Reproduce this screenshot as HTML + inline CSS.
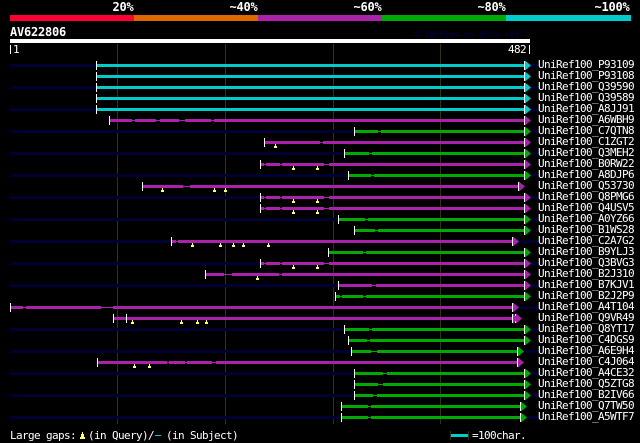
<!DOCTYPE html>
<html><head><meta charset="utf-8"><title>AV622806</title>
<style>
html,body{margin:0;padding:0;background:#000;width:640px;height:443px;overflow:hidden}
svg{display:block}
text{font-family:"DejaVu Sans Mono","Liberation Mono",monospace;fill:#fff;white-space:pre}
.l{font-size:11px;letter-spacing:-.62px}
.b{font-size:12px;font-weight:bold;letter-spacing:-.22px}
.n{fill:#003}.w{fill:#fff}.c{fill:#0cc}.p{fill:#a2a}.g{fill:#0a0}.y{fill:#ff6}
.r path{shape-rendering:crispEdges}
.r path.t{shape-rendering:auto}
</style></head><body>
<svg width="640" height="443" viewBox="0 0 640 443" xmlns="http://www.w3.org/2000/svg">
<rect width="640" height="443" fill="#000"/>
<g shape-rendering="crispEdges">
<rect x="10" y="15" width="124" height="6" fill="#f03"/>
<rect x="134" y="15" width="124" height="6" fill="#d60"/>
<rect x="258" y="15" width="124" height="6" fill="#a2a"/>
<rect x="382" y="15" width="124" height="6" fill="#0a0"/>
<rect x="506" y="15" width="125" height="6" fill="#0cc"/>
<rect x="10" y="39" width="520" height="4" fill="#fff"/>
<rect x="10" y="45" width="1" height="9" fill="#fff"/>
<rect x="529" y="45" width="1" height="9" fill="#fff"/>
<rect x="117" y="44" width="1" height="380" fill="#331"/>
<rect x="225" y="44" width="1" height="380" fill="#331"/>
<rect x="333" y="44" width="1" height="380" fill="#331"/>
<rect x="440" y="44" width="1" height="380" fill="#331"/>
</g>
<text class="b" x="112.5" y="11">20%</text>
<text class="b" x="229.5" y="11">~40%</text>
<text class="b" x="353.5" y="11">~60%</text>
<text class="b" x="477.5" y="11">~80%</text>
<text class="b" x="594.5" y="11">~100%</text>
<text class="b" x="10" y="36">AV622806</text>
<text x="414" y="37" style="font-size:8.33px;font-weight:bold;fill:#003">AlignView.pm Beta rel.7</text>
<text class="l" x="13" y="53">1</text>
<text class="l" x="508" y="53">482</text>

<g class="r" transform="translate(0,64)"><path class="n" d="M10 0H96V3H10zM530 0H539V3H530z"/><path class="c" d="M97 0H525V3H97z"/><path class="w" d="M96-3h1v9h-1zM524-3h1v9h-1z"/><path class="c t" d="M525-3.5L531 1.5L525 6.5z"/></g>
<g class="r" transform="translate(0,75)"><path class="c" d="M97 0H525V3H97z"/><path class="w" d="M96-3h1v9h-1zM524-3h1v9h-1z"/><path class="c t" d="M525-3.5L531 1.5L525 6.5z"/></g>
<g class="r" transform="translate(0,86)"><path class="n" d="M10 0H96V3H10zM530 0H539V3H530z"/><path class="c" d="M97 0H525V3H97z"/><path class="w" d="M96-3h1v9h-1zM524-3h1v9h-1z"/><path class="c t" d="M525-3.5L531 1.5L525 6.5z"/></g>
<g class="r" transform="translate(0,97)"><path class="c" d="M97 0H525V3H97z"/><path class="w" d="M96-3h1v9h-1zM524-3h1v9h-1z"/><path class="c t" d="M525-3.5L531 1.5L525 6.5z"/></g>
<g class="r" transform="translate(0,108)"><path class="n" d="M10 0H96V3H10zM530 0H539V3H530z"/><path class="c" d="M97 0H525V3H97z"/><path class="w" d="M96-3h1v9h-1zM524-3h1v9h-1z"/><path class="c t" d="M525-3.5L531 1.5L525 6.5z"/></g>
<g class="r" transform="translate(0,119)"><path class="p" d="M110 0H132V3H110zM132 1H135V2H132zM135 0H156V3H135zM156 1H160V2H156zM160 0H179V3H160zM179 1H185V2H179zM185 0H211V3H185zM211 1H214V2H211zM214 0H525V3H214z"/><path class="w" d="M109-3h1v9h-1zM524-3h1v9h-1z"/><path class="p t" d="M525-3.5L531 1.5L525 6.5z"/></g>
<g class="r" transform="translate(0,130)"><path class="n" d="M10 0H354V3H10zM530 0H539V3H530z"/><path class="g" d="M355 0H378V3H355zM378 1H381V2H378zM381 0H525V3H381z"/><path class="w" d="M354-3h1v9h-1zM524-3h1v9h-1z"/><path class="g t" d="M525-3.5L531 1.5L525 6.5z"/></g>
<g class="r" transform="translate(0,141)"><path class="p" d="M265 0H320V3H265zM320 1H323V2H320zM323 0H525V3H323z"/><path class="w" d="M264-3h1v9h-1zM524-3h1v9h-1z"/><path class="p t" d="M525-3.5L531 1.5L525 6.5z"/><path class="y" d="M275 3h1v2h1v2h-3v-2h1z"/></g>
<g class="r" transform="translate(0,152)"><path class="n" d="M10 0H344V3H10zM530 0H539V3H530z"/><path class="g" d="M345 0H369V3H345zM369 1H372V2H369zM372 0H525V3H372z"/><path class="w" d="M344-3h1v9h-1zM524-3h1v9h-1z"/><path class="g t" d="M525-3.5L531 1.5L525 6.5z"/></g>
<g class="r" transform="translate(0,163)"><path class="p" d="M261 0H264V3H261zM264 1H266V2H264zM266 0H280V3H266zM280 1H282V2H280zM282 0H324V3H282zM324 1H329V2H324zM329 0H525V3H329z"/><path class="w" d="M260-3h1v9h-1zM524-3h1v9h-1z"/><path class="p t" d="M525-3.5L531 1.5L525 6.5z"/><path class="y" d="M293 3h1v2h1v2h-3v-2h1zM317 3h1v2h1v2h-3v-2h1z"/></g>
<g class="r" transform="translate(0,174)"><path class="n" d="M10 0H348V3H10zM530 0H539V3H530z"/><path class="g" d="M349 0H371V3H349zM371 1H374V2H371zM374 0H525V3H374z"/><path class="w" d="M348-3h1v9h-1zM524-3h1v9h-1z"/><path class="g t" d="M525-3.5L531 1.5L525 6.5z"/></g>
<g class="r" transform="translate(0,185)"><path class="p" d="M143 0H183V3H143zM183 1H190V2H183zM190 0H519V3H190z"/><path class="w" d="M142-3h1v9h-1zM518-3h1v9h-1z"/><path class="p t" d="M519-3.5L525 1.5L519 6.5z"/><path class="y" d="M162 3h1v2h1v2h-3v-2h1zM214 3h1v2h1v2h-3v-2h1zM225 3h1v2h1v2h-3v-2h1z"/></g>
<g class="r" transform="translate(0,196)"><path class="n" d="M10 0H260V3H10zM530 0H539V3H530z"/><path class="p" d="M261 0H264V3H261zM264 1H266V2H264zM266 0H280V3H266zM280 1H282V2H280zM282 0H324V3H282zM324 1H329V2H324zM329 0H525V3H329z"/><path class="w" d="M260-3h1v9h-1zM524-3h1v9h-1z"/><path class="p t" d="M525-3.5L531 1.5L525 6.5z"/><path class="y" d="M293 3h1v2h1v2h-3v-2h1zM317 3h1v2h1v2h-3v-2h1z"/></g>
<g class="r" transform="translate(0,207)"><path class="p" d="M261 0H264V3H261zM264 1H266V2H264zM266 0H280V3H266zM280 1H282V2H280zM282 0H324V3H282zM324 1H329V2H324zM329 0H525V3H329z"/><path class="w" d="M260-3h1v9h-1zM524-3h1v9h-1z"/><path class="p t" d="M525-3.5L531 1.5L525 6.5z"/><path class="y" d="M293 3h1v2h1v2h-3v-2h1zM317 3h1v2h1v2h-3v-2h1z"/></g>
<g class="r" transform="translate(0,218)"><path class="n" d="M10 0H338V3H10zM530 0H539V3H530z"/><path class="g" d="M339 0H365V3H339zM365 1H368V2H365zM368 0H525V3H368z"/><path class="w" d="M338-3h1v9h-1zM524-3h1v9h-1z"/><path class="g t" d="M525-3.5L531 1.5L525 6.5z"/></g>
<g class="r" transform="translate(0,229)"><path class="g" d="M355 0H375V3H355zM375 1H378V2H375zM378 0H525V3H378z"/><path class="w" d="M354-3h1v9h-1zM524-3h1v9h-1z"/><path class="g t" d="M525-3.5L531 1.5L525 6.5z"/></g>
<g class="r" transform="translate(0,240)"><path class="n" d="M10 0H171V3H10zM518 0H539V3H518z"/><path class="p" d="M172 0H176V3H172zM176 1H178V2H176zM178 0H513V3H178z"/><path class="w" d="M171-3h1v9h-1zM512-3h1v9h-1z"/><path class="p t" d="M513-3.5L519 1.5L513 6.5z"/><path class="y" d="M192 3h1v2h1v2h-3v-2h1zM220 3h1v2h1v2h-3v-2h1zM233 3h1v2h1v2h-3v-2h1zM243 3h1v2h1v2h-3v-2h1zM268 3h1v2h1v2h-3v-2h1z"/></g>
<g class="r" transform="translate(0,251)"><path class="g" d="M329 0H363V3H329zM363 1H366V2H363zM366 0H525V3H366z"/><path class="w" d="M328-3h1v9h-1zM524-3h1v9h-1z"/><path class="g t" d="M525-3.5L531 1.5L525 6.5z"/></g>
<g class="r" transform="translate(0,262)"><path class="n" d="M10 0H260V3H10zM530 0H539V3H530z"/><path class="p" d="M261 0H264V3H261zM264 1H266V2H264zM266 0H280V3H266zM280 1H282V2H280zM282 0H324V3H282zM324 1H329V2H324zM329 0H525V3H329z"/><path class="w" d="M260-3h1v9h-1zM524-3h1v9h-1z"/><path class="p t" d="M525-3.5L531 1.5L525 6.5z"/><path class="y" d="M293 3h1v2h1v2h-3v-2h1zM317 3h1v2h1v2h-3v-2h1z"/></g>
<g class="r" transform="translate(0,273)"><path class="p" d="M206 0H224V3H206zM224 1H232V2H224zM232 0H279V3H232zM279 1H282V2H279zM282 0H525V3H282z"/><path class="w" d="M205-3h1v9h-1zM524-3h1v9h-1z"/><path class="p t" d="M525-3.5L531 1.5L525 6.5z"/><path class="y" d="M257 3h1v2h1v2h-3v-2h1z"/></g>
<g class="r" transform="translate(0,284)"><path class="n" d="M10 0H338V3H10zM530 0H539V3H530z"/><path class="p" d="M339 0H372V3H339zM372 1H376V2H372zM376 0H525V3H376z"/><path class="w" d="M338-3h1v9h-1zM524-3h1v9h-1z"/><path class="p t" d="M525-3.5L531 1.5L525 6.5z"/></g>
<g class="r" transform="translate(0,295)"><path class="g" d="M336 0H340V3H336zM340 1H342V2H340zM342 0H363V3H342zM363 1H366V2H363zM366 0H525V3H366z"/><path class="w" d="M335-3h1v9h-1zM524-3h1v9h-1z"/><path class="g t" d="M525-3.5L531 1.5L525 6.5z"/></g>
<g class="r" transform="translate(0,306)"><path class="n" d="M518 0H539V3H518z"/><path class="p" d="M11 0H23V3H11zM23 1H26V2H23zM26 0H101V3H26zM101 1H113V2H101zM113 0H513V3H113z"/><path class="w" d="M10-3h1v9h-1zM512-3h1v9h-1z"/><path class="p t" d="M513-3.5L519 1.5L513 6.5z"/></g>
<g class="r" transform="translate(0,317)"><path class="p" d="M114 0H515V3H114z"/><path class="w" d="M113-3h1v9h-1zM126-3h1v9h-1zM512-3h1v9h-1zM515-3h1v9h-1z"/><path class="p t" d="M513-3.5L519 1.5L513 6.5zM516-3.5L522 1.5L516 6.5z"/><path class="y" d="M132 3h1v2h1v2h-3v-2h1zM181 3h1v2h1v2h-3v-2h1zM197 3h1v2h1v2h-3v-2h1zM206 3h1v2h1v2h-3v-2h1z"/></g>
<g class="r" transform="translate(0,328)"><path class="n" d="M10 0H344V3H10zM530 0H539V3H530z"/><path class="g" d="M345 0H369V3H345zM369 1H372V2H369zM372 0H525V3H372z"/><path class="w" d="M344-3h1v9h-1zM524-3h1v9h-1z"/><path class="g t" d="M525-3.5L531 1.5L525 6.5z"/></g>
<g class="r" transform="translate(0,339)"><path class="g" d="M349 0H367V3H349zM367 1H370V2H367zM370 0H525V3H370z"/><path class="w" d="M348-3h1v9h-1zM524-3h1v9h-1z"/><path class="g t" d="M525-3.5L531 1.5L525 6.5z"/></g>
<g class="r" transform="translate(0,350)"><path class="n" d="M10 0H351V3H10zM523 0H539V3H523z"/><path class="g" d="M352 0H371V3H352zM371 1H377V2H371zM377 0H518V3H377z"/><path class="w" d="M351-3h1v9h-1zM517-3h1v9h-1z"/><path class="g t" d="M518-3.5L524 1.5L518 6.5z"/></g>
<g class="r" transform="translate(0,361)"><path class="p" d="M98 0H167V3H98zM167 1H169V2H167zM169 0H185V3H169zM185 1H187V2H185zM187 0H212V3H187zM212 1H216V2H212zM216 0H518V3H216z"/><path class="w" d="M97-3h1v9h-1zM517-3h1v9h-1z"/><path class="p t" d="M518-3.5L524 1.5L518 6.5z"/><path class="y" d="M134 3h1v2h1v2h-3v-2h1zM149 3h1v2h1v2h-3v-2h1z"/></g>
<g class="r" transform="translate(0,372)"><path class="n" d="M10 0H354V3H10zM530 0H539V3H530z"/><path class="g" d="M355 0H383V3H355zM383 1H387V2H383zM387 0H525V3H387z"/><path class="w" d="M354-3h1v9h-1zM524-3h1v9h-1z"/><path class="g t" d="M525-3.5L531 1.5L525 6.5z"/></g>
<g class="r" transform="translate(0,383)"><path class="g" d="M355 0H378V3H355zM378 1H383V2H378zM383 0H525V3H383z"/><path class="w" d="M354-3h1v9h-1zM524-3h1v9h-1z"/><path class="g t" d="M525-3.5L531 1.5L525 6.5z"/></g>
<g class="r" transform="translate(0,394)"><path class="n" d="M10 0H354V3H10zM530 0H539V3H530z"/><path class="g" d="M355 0H373V3H355zM373 1H377V2H373zM377 0H525V3H377z"/><path class="w" d="M354-3h1v9h-1zM524-3h1v9h-1z"/><path class="g t" d="M525-3.5L531 1.5L525 6.5z"/></g>
<g class="r" transform="translate(0,405)"><path class="g" d="M342 0H368V3H342zM368 1H371V2H368zM371 0H521V3H371z"/><path class="w" d="M341-3h1v9h-1zM520-3h1v9h-1z"/><path class="g t" d="M521-3.5L527 1.5L521 6.5z"/></g>
<g class="r" transform="translate(0,416)"><path class="n" d="M10 0H341V3H10zM526 0H539V3H526z"/><path class="g" d="M342 0H368V3H342zM368 1H371V2H368zM371 0H521V3H371z"/><path class="w" d="M341-3h1v9h-1zM520-3h1v9h-1z"/><path class="g t" d="M521-3.5L527 1.5L521 6.5z"/></g>

<g>
<text class="l" x="538" y="68">UniRef100_P93109</text>
<text class="l" x="538" y="79">UniRef100_P93108</text>
<text class="l" x="538" y="90">UniRef100_Q39590</text>
<text class="l" x="538" y="101">UniRef100_Q39589</text>
<text class="l" x="538" y="112">UniRef100_A8JJ91</text>
<text class="l" x="538" y="123">UniRef100_A6WBH9</text>
<text class="l" x="538" y="134">UniRef100_C7QTN8</text>
<text class="l" x="538" y="145">UniRef100_C1ZGT2</text>
<text class="l" x="538" y="156">UniRef100_Q3MEH2</text>
<text class="l" x="538" y="167">UniRef100_B0RW22</text>
<text class="l" x="538" y="178">UniRef100_A8DJP6</text>
<text class="l" x="538" y="189">UniRef100_Q53730</text>
<text class="l" x="538" y="200">UniRef100_Q8PMG6</text>
<text class="l" x="538" y="211">UniRef100_Q4USV5</text>
<text class="l" x="538" y="222">UniRef100_A0YZ66</text>
<text class="l" x="538" y="233">UniRef100_B1WS28</text>
<text class="l" x="538" y="244">UniRef100_C2A7G2</text>
<text class="l" x="538" y="255">UniRef100_B9YLJ3</text>
<text class="l" x="538" y="266">UniRef100_Q3BVG3</text>
<text class="l" x="538" y="277">UniRef100_B2J310</text>
<text class="l" x="538" y="288">UniRef100_B7KJV1</text>
<text class="l" x="538" y="299">UniRef100_B2J2P9</text>
<text class="l" x="538" y="310">UniRef100_A4T104</text>
<text class="l" x="538" y="321">UniRef100_Q9VR49</text>
<text class="l" x="538" y="332">UniRef100_Q8YT17</text>
<text class="l" x="538" y="343">UniRef100_C4DGS9</text>
<text class="l" x="538" y="354">UniRef100_A6E9H4</text>
<text class="l" x="538" y="365">UniRef100_C4J064</text>
<text class="l" x="538" y="376">UniRef100_A4CE32</text>
<text class="l" x="538" y="387">UniRef100_Q5ZTG8</text>
<text class="l" x="538" y="398">UniRef100_B2IV66</text>
<text class="l" x="538" y="409">UniRef100_Q7TW50</text>
<text class="l" x="538" y="420">UniRef100_A5WTF7</text>
</g>

<text class="l" x="10" y="439">Large gaps:</text>
<g class="r"><path class="y" d="M82 432h1v2h1v3h1v2h-5v-2h1v-3h1z"/><path class="c" d="M155 435h6v1h-6z"/>
<path fill="#331" d="M450 431h1v9h-1zM468 431h1v9h-1z"/><path class="c" d="M451 434h17v3h-17z"/></g>
<text class="l" x="88" y="439">(in Query)/</text>
<text class="l" x="166" y="439">(in Subject)</text>
<text class="l" x="472" y="439">=100char.</text>
</svg>
</body></html>
